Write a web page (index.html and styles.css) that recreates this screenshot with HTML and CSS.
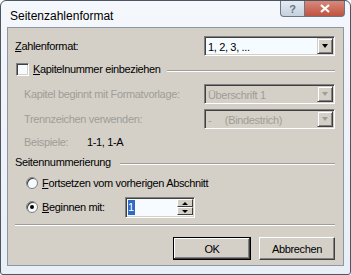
FILE: index.html
```html
<!DOCTYPE html>
<html lang="de">
<head>
  <meta charset="UTF-8" />
  <title>Seitenzahlenformat</title>
  <link rel="stylesheet" href="styles.css">
</head>
<body>

  <div class="window">
    <div class="titlebar">
      <span class="title">Seitenzahlenformat</span>
      <div class="caption-btns">
        <span class="cap-btn help">?</span>
        <span class="cap-btn close">
          <svg width="10" height="9" viewBox="0 0 10 9"><path d="M1 1 L9 8 M9 1 L1 8" stroke="#fff" stroke-width="2.2"/></svg>
        </span>
      </div>
    </div>

    <div class="client">
      <div class="row first">
        <span class="label"><u>Z</u>ahlenformat:</span>
        <div class="combo">
          <span class="combo-text">1, 2, 3, ...</span>
          <span class="drop"><i class="arrow"></i></span>
        </div>
      </div>

      <div class="group-head check-head">
        <span class="check"></span>
        <span><u>K</u>apitelnummer einbeziehen</span>
        <span class="line"></span>
      </div>

      <div class="row indent disabled r3">
        <span class="label">Kapitel beginnt mit Formatvorlage:</span>
        <div class="combo off">
          <span class="combo-text">Überschrift 1</span>
          <span class="drop"><i class="arrow"></i></span>
        </div>
      </div>

      <div class="row indent disabled r4">
        <span class="label">Trennzeichen verwenden:</span>
        <div class="combo off">
          <span class="combo-text">-&nbsp;&nbsp;&nbsp;&nbsp;&nbsp;(Bindestrich)</span>
          <span class="drop"><i class="arrow"></i></span>
        </div>
      </div>

      <div class="example">
        <span class="muted">Beispiele:</span>
        <span>1-1, 1-A</span>
      </div>

      <div class="group-head numbering">
        <span>Seitennummerierung</span>
        <span class="line"></span>
      </div>

      <div class="radio-row r-first">
        <span class="radio"></span>
        <span><u>F</u>ortsetzen vom vorherigen Abschnitt</span>
      </div>

      <div class="radio-row r-second">
        <span class="radio checked"></span>
        <span class="radio-label"><u>B</u>eginnen mit:</span>
        <div class="spin">
          <span class="spin-text"><span class="sel">1</span></span>
          <span class="spin-btns">
            <span class="spin-btn"><i class="arrow up"></i></span>
            <span class="spin-btn"><i class="arrow"></i></span>
          </span>
        </div>
      </div>

      <div class="sep"></div>

      <div class="buttons">
        <span class="btn default">OK</span>
        <span class="btn">Abbrechen</span>
      </div>
    </div>
  </div>

</body>
</html>
```

FILE: styles.css
```css
body {
  margin: 0;
  background: #fff;
  font-family: 'Liberation Sans', Arial, sans-serif;
  font-size: 11px;
  color: #000;
}

.window {
  width: 351px;
  height: 275px;
  box-sizing: border-box;
  border: 1px solid #4d5560;
  border-radius: 6px 6px 3px 3px;
  background: linear-gradient(#f4f7fb, #e9eff6);
  padding: 0 6px 8px 6px;
  display: flex;
  flex-direction: column;
}

.titlebar {
  height: 26px;
  display: flex;
  justify-content: space-between;
  align-items: flex-start;
}

.title {
  font-size: 12px;
  margin: 8px 0 0 3px;
  color: #000;
}

.caption-btns {
  display: flex;
  margin-right: -1px;
}

.cap-btn {
  height: 16px;
  display: flex;
  align-items: center;
  justify-content: center;
  box-sizing: border-box;
  border: 1px solid #6d7684;
  border-top: none;
}

.help {
  width: 25px;
  border-radius: 0 0 0 4px;
  background: linear-gradient(#e3eaf2, #c6d1de);
  color: #6a7585;
  font-weight: bold;
  font-size: 11px;
}

.close {
  width: 40px;
  border-left: none;
  border-radius: 0 0 4px 0;
  background: linear-gradient(#d8897c, #c0533f);
}

.client {
  flex: 1;
  border: 1px solid #8d97a3;
  background: #d4d0c8;
  padding: 8px 8px 0 7px;
  letter-spacing: -0.35px;
}

.row {
  display: flex;
  align-items: center;
  height: 20px;
}

.row .label {
  width: 189px;
}

.row.indent .label {
  width: 180px;
  padding-left: 9px;
}

.r3 { margin-top: 8px; }
.r4 { margin-top: 5px; }

.disabled .label {
  color: #a09d96;
}

.combo {
  width: 131px;
  height: 20px;
  box-sizing: border-box;
  display: flex;
  align-items: center;
  justify-content: space-between;
  background: #f5fbfe;
  border: 1px solid;
  border-color: #808080 #fff #fff #808080;
  box-shadow: inset 1px 1px 0 #404040, inset -1px -1px 0 #d4d0c8;
}

.combo-text {
  padding-left: 3px;
  padding-top: 1px;
}

.combo.off {
  background: #d4d0c8;
  color: #a09d96;
}

.drop {
  width: 16px;
  height: 16px;
  margin-right: 1px;
  box-sizing: border-box;
  background: #d4d0c8;
  border: 1px solid;
  border-color: #d4d0c8 #404040 #404040 #d4d0c8;
  box-shadow: inset 1px 1px 0 #fff, inset -1px -1px 0 #808080;
  display: flex;
  align-items: center;
  justify-content: center;
}

.arrow {
  width: 0;
  height: 0;
  border-left: 3.5px solid transparent;
  border-right: 3.5px solid transparent;
  border-top: 4px solid #000;
}

.arrow.up {
  border-top: none;
  border-bottom: 4px solid #000;
}

.combo.off .arrow {
  border-top-color: #a09d96;
}

.group-head {
  display: flex;
  align-items: center;
  height: 14px;
}

.check-head {
  margin-top: 6px;
}

.check {
  width: 13px;
  height: 13px;
  box-sizing: border-box;
  margin: 0 4px 0 1px;
  background: #f5fbfe;
  border: 1px solid;
  border-color: #808080 #fff #fff #808080;
  box-shadow: inset 1px 1px 0 #404040, inset -1px -1px 0 #d4d0c8;
}

.line {
  flex: 1;
  margin: 3px 0 0 6px;
  border-top: 1px solid #a09d96;
  border-bottom: 1px solid #fff;
}

.example {
  display: flex;
  align-items: center;
  height: 14px;
  margin-top: 6px;
  padding-left: 9px;
}

.muted {
  color: #a09d96;
  width: 63px;
}

.numbering {
  margin-top: 6px;
}

.numbering .line {
  margin-left: 9px;
}

.radio-row {
  display: flex;
  align-items: center;
  padding-left: 11px;
}

.r-first {
  height: 14px;
  margin-top: 7px;
}

.r-second {
  height: 22px;
  margin-top: 6px;
}

.radio {
  width: 12px;
  height: 12px;
  box-sizing: border-box;
  border-radius: 50%;
  background: #f5fbfe;
  border: 1px solid #808080;
  box-shadow: inset 1px 1px 0 #404040;
  margin-right: 4px;
  display: flex;
  align-items: center;
  justify-content: center;
}

.radio.checked::after {
  content: "";
  width: 4px;
  height: 4px;
  border-radius: 50%;
  background: #000;
}

.radio-label {
  width: 83px;
}

.spin {
  width: 70px;
  height: 21px;
  box-sizing: border-box;
  display: flex;
  align-items: center;
  justify-content: space-between;
  background: #f5fbfe;
  border: 1px solid;
  border-color: #808080 #fff #fff #808080;
  box-shadow: inset 1px 1px 0 #404040, inset -1px -1px 0 #d4d0c8;
}

.spin-text {
  padding-left: 2px;
}

.sel {
  background: #316ac5;
  color: #fff;
  padding: 1px 1px 2px 0;
}

.spin-btns {
  display: flex;
  flex-direction: column;
  margin-right: 1px;
}

.spin-btn {
  width: 16px;
  height: 8px;
  box-sizing: border-box;
  background: #d4d0c8;
  border: 1px solid;
  border-color: #fff #404040 #404040 #fff;
  display: flex;
  align-items: center;
  justify-content: center;
}

.spin-btn .arrow {
  border-left-width: 3px;
  border-right-width: 3px;
  border-top-width: 3px;
}

.spin-btn .arrow.up {
  border-bottom-width: 3px;
}

.sep {
  margin-top: 6px;
  border-top: 1px solid #a09d96;
  border-bottom: 1px solid #fff;
}

.buttons {
  display: flex;
  justify-content: flex-end;
  gap: 8px;
  margin-top: 11px;
}

.btn {
  width: 76px;
  height: 23px;
  box-sizing: border-box;
  display: flex;
  align-items: center;
  justify-content: center;
  background: #d4d0c8;
  border: 1px solid;
  border-color: #fff #404040 #404040 #fff;
  box-shadow: inset -1px -1px 0 #808080;
}

.btn.default {
  width: 78px;
  outline: 1px solid #000;
  outline-offset: -1px;
  box-shadow: inset -1px -1px 0 #404040, inset 1px 1px 0 #fff, inset -2px -2px 0 #808080;
}
```
